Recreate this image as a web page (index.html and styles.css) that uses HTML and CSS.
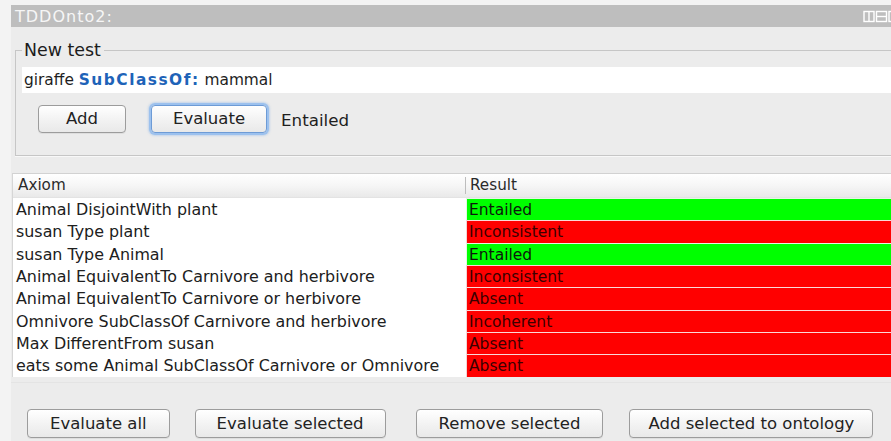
FILE: index.html
```html
<!DOCTYPE html>
<html lang="en">
<head>
<meta charset="utf-8">
<title>TDDOnto2</title>
<link rel="stylesheet" href="styles.css">
</head>
<body>
<div class="view">
  <div class="titlebar">
    <span class="title">TDDOnto2:</span>
    <span class="layout-icons">
      <svg width="34" height="13" viewBox="0 0 34 13">
        <g fill="none" stroke="#ffffff" stroke-width="1.4">
          <rect x="1" y="1.5" width="10" height="10"/>
          <line x1="6" y1="1.5" x2="6" y2="11.5"/>
          <rect x="13.5" y="1.5" width="10" height="10"/>
          <line x1="13.5" y1="6.5" x2="23.5" y2="6.5"/>
          <rect x="26" y="1.5" width="10" height="10"/>
        </g>
      </svg>
    </span>
  </div>

  <fieldset class="new-test">
    <legend>New test</legend>
    <div class="axiom-field">giraffe <b class="kw">SubClassOf:</b> mammal</div>
    <div class="test-actions">
      <button class="btn add">Add</button>
      <button class="btn focused">Evaluate</button>
      <span class="status">Entailed</span>
    </div>
  </fieldset>

  <div class="results">
    <div class="thead">
      <div class="th">Axiom</div>
      <div class="th th-result">Result</div>
    </div>
    <div class="row"><div class="cell">Animal DisjointWith plant</div><div class="res ok">Entailed</div></div>
    <div class="row"><div class="cell">susan Type plant</div><div class="res bad">Inconsistent</div></div>
    <div class="row"><div class="cell">susan Type Animal</div><div class="res ok">Entailed</div></div>
    <div class="row"><div class="cell">Animal EquivalentTo Carnivore and herbivore</div><div class="res bad">Inconsistent</div></div>
    <div class="row"><div class="cell">Animal EquivalentTo Carnivore or herbivore</div><div class="res bad">Absent</div></div>
    <div class="row"><div class="cell">Omnivore SubClassOf Carnivore and herbivore</div><div class="res bad">Incoherent</div></div>
    <div class="row"><div class="cell">Max DifferentFrom susan</div><div class="res bad">Absent</div></div>
    <div class="row"><div class="cell">eats some Animal SubClassOf Carnivore or Omnivore</div><div class="res bad">Absent</div></div>
  </div>

  <div class="footer">
    <button class="btn">Evaluate all</button>
    <button class="btn">Evaluate selected</button>
    <button class="btn">Remove selected</button>
    <button class="btn">Add selected to ontology</button>
  </div>
</div>
</body>
</html>
```

FILE: styles.css
```css
html, body {
  margin: 0;
  padding: 0;
  height: 100%;
  overflow: hidden;
}

body {
  background: #f3f3f3;
  font-family: "DejaVu Sans", "Liberation Sans", sans-serif;
  color: #1e1e1e;
}

.view {
  margin: 5px 0 0 11px;
  background: #ececec;
  height: 436px;
  display: flex;
  flex-direction: column;
}

/* view header strip */
.titlebar {
  height: 22px;
  background: #bebebe;
  display: flex;
  align-items: center;
  justify-content: space-between;
  flex-shrink: 0;
}

.title {
  color: #f6f6f6;
  font-size: 16px;
  letter-spacing: 1px;
  padding-left: 4px;
}

.layout-icons {
  display: flex;
  align-items: center;
  margin-right: -6px;
  height: 13px;
}

.layout-icons svg {
  display: block;
}

/* "New test" group */
.new-test {
  margin: 13px 0 0 4px;
  padding: 7px 0 22px 6px;
  border: 1px solid #c6c6c6;
  border-right: none;
  box-shadow: 0 1px 0 #f8f8f8;
  min-width: 0;
  flex-shrink: 0;
}

.new-test legend {
  font-size: 17.4px;
  padding: 0 3px 0 2px;
  margin-left: 0;
  color: #1c1c1c;
}

.axiom-field {
  background: #ffffff;
  height: 26px;
  line-height: 27px;
  padding-left: 2px;
  font-size: 15.4px;
  white-space: nowrap;
}

.axiom-field .kw {
  color: #1e63b8;
  letter-spacing: 1.5px;
}

.test-actions {
  display: flex;
  align-items: center;
  margin-top: 12px;
  padding-left: 16px;
  gap: 25px;
}

.status {
  font-size: 16.7px;
  margin-left: -11px;
  padding-top: 1px;
}

.btn {
  font-family: "DejaVu Sans", "Liberation Sans", sans-serif;
  font-size: 16.5px;
  color: #222;
  height: 28px;
  padding: 0 21px;
  border: 1px solid #9c9c9c;
  border-radius: 4px;
  background: linear-gradient(#ffffff, #f2f2f2 55%, #e9e9e9);
  box-shadow: 0 1px 0 rgba(0, 0, 0, 0.06);
  line-height: 26px;
}

.btn.add {
  padding: 0 27px;
}

.btn.focused {
  border-color: #6d9bd6;
  box-shadow: 0 0 0 2px #9cc1ee, 0 0 2px 3px rgba(120, 170, 230, 0.35);
  padding: 0 21px;
}

/* axiom results table */
.results {
  margin: 17px 0 0 1px;
  border-top: 1px solid #d2d2d2;
  border-left: 1px solid #d6d6d6;
  background: #ffffff;
  flex-shrink: 0;
}

.thead {
  display: grid;
  grid-template-columns: 452px 1fr;
  height: 23px;
  background: linear-gradient(#ffffff, #f6f6f6 50%, #e9e9e9);
  border-bottom: 1px solid #e3e3e3;
}

.th {
  font-size: 15.2px;
  line-height: 23px;
  padding-left: 5px;
  color: #2a2a2a;
}

.th-result {
  border-left: 1px solid #bdbdbd;
  margin: 3px 0;
  line-height: 17px;
  padding-left: 4px;
}

.row {
  display: grid;
  grid-template-columns: 453px 1fr;
  height: 22.35px;
}

.cell {
  font-size: 15.9px;
  line-height: 23px;
  padding-left: 3px;
  white-space: nowrap;
  color: #202020;
}

.res {
  font-size: 15.5px;
  line-height: 22px;
  padding-left: 2px;
  border-top: 1px solid #fbd8d8;
  border-left: 1px solid #f4d4d4;
}

.res.ok {
  background: #00ff00;
  color: #0c1a0c;
  border-top-color: #e4f7e4;
  border-left-color: #e4f7e4;
}

.res.bad {
  background: #ff0000;
  color: #3a0000;
}

.row:first-of-type .res {
  border-top-color: #e7e7e7;
}

/* bottom action bar */
.footer {
  margin-top: 5px;
  border-top: 1px solid #e4e4e4;
  flex: 1;
  display: flex;
  align-items: flex-start;
  padding: 26px 0 0 16px;
}

.footer .btn {
  height: 29px;
  line-height: 27px;
}

.footer .btn:nth-child(1) { padding: 0 22px; }
.footer .btn:nth-child(2) { margin-left: 25px; }
.footer .btn:nth-child(3) { margin-left: 30px; padding: 0 22px; }
.footer .btn:nth-child(4) { margin-left: 26px; padding: 0 18px; }
```
